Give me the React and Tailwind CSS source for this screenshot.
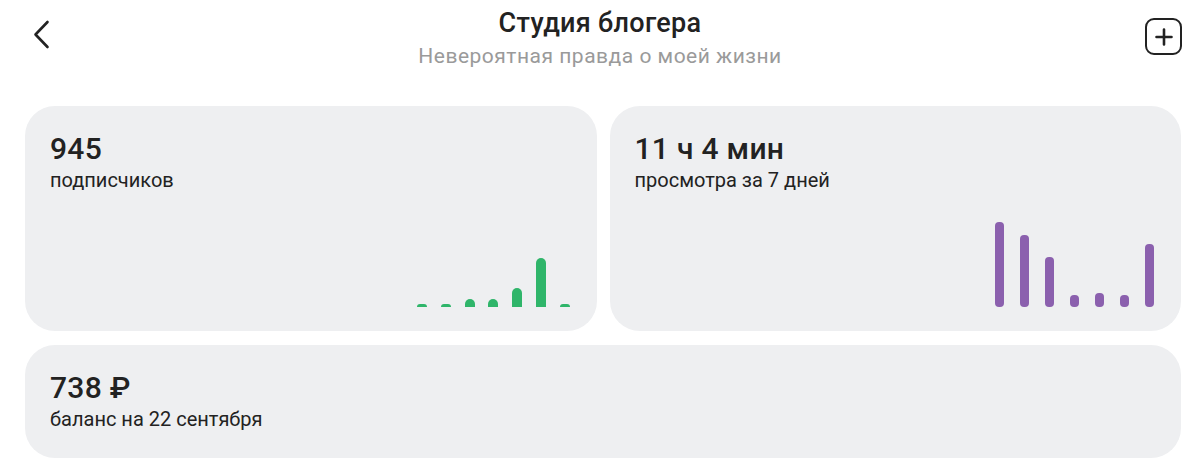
const subsBars = [3, 3, 8, 8, 19, 49, 3]
const viewBars = [85, 72, 50, 12, 14, 12, 63]

function Bars({ data, color, gap, width, radius }) {
  return (
    <div className={`flex items-end ${gap}`}>
      {data.map((h, i) => (
        <div key={i} className={`${width} ${color} ${radius}`} style={{ height: h }} />
      ))}
    </div>
  )
}

function StatCard({ value, label, children }) {
  return (
    <div className="flex-1 h-[225px] rounded-[30px] bg-[#eeeff1] pl-[25px] pt-[25px] pr-[27px] pb-[24px] flex flex-col">
      <div className="text-[30px] leading-[36px] font-medium tracking-[0.3px] text-[#222]">{value}</div>
      <div className="text-[20px] leading-[26px] text-[#222]">{label}</div>
      <div className="flex-1 flex items-end justify-end">{children}</div>
    </div>
  )
}

export default function App() {
  return (
    <div className="w-[1200px] h-[466px] bg-white overflow-hidden" style={{ fontFamily: 'Roboto, sans-serif' }}>
      <header className="relative h-[106px] flex flex-col items-center pt-[6px]">
        <button className="absolute left-[32px] top-[19px]">
          <svg width="20" height="31" viewBox="0 0 20 31" fill="none" stroke="#222" strokeWidth="2.6" strokeLinecap="round" strokeLinejoin="round">
            <path d="M15.5 3 L3.5 15.5 L15.5 28" />
          </svg>
        </button>
        <h1 className="text-[27px] leading-[34px] font-medium tracking-[0.3px] text-[#222]">Студия блогера</h1>
        <p className="mt-[2px] text-[21px] leading-[28px] tracking-[0.5px] text-[#9a9a9a]">Невероятная правда о моей жизни</p>
        <button className="absolute right-[18px] top-[18px] w-[37px] h-[37px] rounded-[9px] border-[2.5px] border-[#222] flex items-center justify-center">
          <svg width="18" height="18" viewBox="0 0 18 18" fill="none" stroke="#222" strokeWidth="2.6" strokeLinecap="round">
            <path d="M9 1.5v15M1.5 9h15" />
          </svg>
        </button>
      </header>
      <main className="pl-[25px] pr-[19px] flex flex-col gap-[14px]">
        <div className="flex gap-[13px]">
          <StatCard value="945" label="подписчиков">
            <Bars data={subsBars} color="bg-[#2fb56a]" gap="gap-[13.7px]" width="w-[10px]" radius="rounded-t-full rounded-b-[1px]" />
          </StatCard>
          <StatCard value="11 ч 4 мин" label="просмотра за 7 дней">
            <Bars data={viewBars} color="bg-[#8b60ae]" gap="gap-[16px]" width="w-[9px]" radius="rounded-[4px]" />
          </StatCard>
        </div>
        <div className="h-[113px] rounded-[30px] bg-[#eeeff1] pl-[25px] pt-[25px]">
          <div className="text-[30px] leading-[36px] font-medium tracking-[0.3px] text-[#222]">738 ₽</div>
          <div className="text-[20px] leading-[26px] text-[#222]">баланс на 22 сентября</div>
        </div>
      </main>
    </div>
  )
}
